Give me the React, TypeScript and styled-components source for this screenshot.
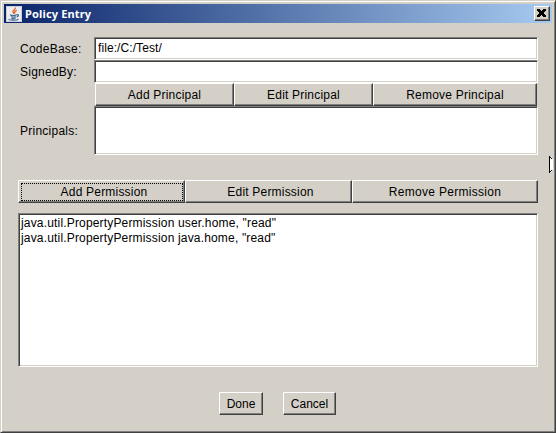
import React from "react";
import styled, { createGlobalStyle, css } from "styled-components";

const GlobalStyle = createGlobalStyle`
  * { box-sizing: border-box; }
  body { margin: 0; overflow: hidden; background: #d4d0c8; }
`;

const Window = styled.main`
  position: relative;
  width: 556px;
  height: 433px;
  padding: 2px;
  background: #d4d0c8;
  border: 1px solid;
  border-color: #d4d0c8 #404040 #404040 #d4d0c8;
  box-shadow: inset 1px 1px #fff, inset -1px -1px #808080;
  font: 12px/15px "Liberation Sans", Arial, sans-serif;
  color: #000;
`;

const TitleBar = styled.header`
  display: flex;
  align-items: center;
  height: 19px;
  margin: 1px 1px 0;
  padding: 0 2px;
  background: linear-gradient(to right, #0a246a, #a6caf0);
`;

const Title = styled.h1`
  flex: 1;
  margin: 0 0 0 3px;
  color: #fff;
  font: bold 11px/16px "Noto Sans", sans-serif;
  letter-spacing: 0.16px;
`;

const CloseButton = styled.button`
  display: grid;
  place-items: center;
  width: 16px;
  height: 15px;
  padding: 0 1px 1px 0;
  background: #d4d0c8;
  border: 1px solid;
  border-color: #fff #404040 #404040 #fff;
  box-shadow: inset -1px -1px #808080;
`;

const Body = styled.div`
  padding: 14px 15px 0 15px;
`;

const Form = styled.section`
  display: grid;
  grid-template-columns: 76px 444px;
  grid-template-rows: 23px 23px 23px 49px;
`;

const Label = styled.label<{ $drop?: number }>`
  padding: ${(p) => 5 + (p.$drop ?? 0)}px 0 0 2px;
  letter-spacing: 0.25px;
`;

const sunken = css`
  display: block;
  margin: 0;
  background: #fff;
  border: 1px solid;
  border-color: #808080 #fff #fff #808080;
  box-shadow: inset 1px 1px #404040, inset -1px -1px #d4d0c8;
  border-radius: 0;
  outline: 0;
  font: inherit;
  color: #000;
`;

const Field = styled.input`
  ${sunken}
  width: 444px;
  height: 23px;
  padding: 0 3px 1px;
  letter-spacing: 0.08px;
`;

const ListBox = styled.div<{ $height: number }>`
  ${sunken}
  height: ${(p) => p.$height}px;
  padding: 2px 2px;
`;

const Entry = styled.div`
  height: 15px;
  white-space: pre;
  letter-spacing: 0.17px;
`;

const ButtonRow = styled.div<{ $columns: string; $inset?: boolean }>`
  display: grid;
  grid-column: ${(p) => (p.$inset ? 2 : "auto")};
  grid-template-columns: ${(p) => p.$columns};
  margin-left: ${(p) => (p.$inset ? 1 : 0)}px;
`;

const Button = styled.button<{ $spacing?: number; $shift?: number }>`
  display: flex;
  align-items: center;
  justify-content: center;
  height: 23px;
  padding: 2px 0 0 ${(p) => p.$shift ?? 0}px;
  background: #d4d0c8;
  border: 1px solid;
  border-color: #fff #404040 #404040 #fff;
  border-radius: 0;
  box-shadow: inset -1px -1px #808080;
  font: inherit;
  color: #000;
  letter-spacing: ${(p) => p.$spacing ?? 0.2}px;
  white-space: nowrap;
`;

const FocusedButton = styled(Button)`
  align-items: flex-start;
  justify-content: flex-start;
  padding: 2px 0 0 2px;
`;

const FocusRing = styled.span`
  display: grid;
  place-items: center;
  width: 162px;
  height: 18px;
  padding: 1px 0 0 4px;
  border: 1px dotted #000;
`;

const Permissions = styled.section`
  display: grid;
  gap: 10px;
  margin-top: 25px;
`;

const Footer = styled.footer`
  display: grid;
  grid-template-columns: 44px 53px;
  column-gap: 20px;
  width: 117px;
  margin: 25px 0 0 201px;
`;

const Cursor = styled.svg`
  position: absolute;
  top: 155px;
  left: 548px;
`;

function JavaIcon() {
  return (
    <svg width="16" height="16" viewBox="0 0 16 16" aria-label="Java">
      <rect width="16" height="16" fill="#ececf0" />
      <path d="M.5.5h15v15H.5z" fill="none" stroke="#c9cfdb" />
      <path d="M9.3 1.5C10 4 6 4.2 7 6.2L8.2 8M10.8 4.3C8.5 5 8.2 6 9 7.5" fill="none" stroke="#e2622b" strokeWidth="1.3" />
      <path d="M4 8.7c1.5 1 5 .8 7 0m0 0c2-.4 2 1.5-.3 2.3M5 10.6c1.3.8 3.6.7 5 .2M5.3 12.2c1.3.7 3 .6 4.2.1M3 13c-1 1.2 7.2 1.7 9.5.2" fill="none" stroke="#3f6d92" strokeWidth="1.15" />
    </svg>
  );
}

export default function App() {
  return (
    <>
      <GlobalStyle />
      <Window>
        <TitleBar>
          <JavaIcon />
          <Title>Policy Entry</Title>
          <CloseButton aria-label="Close">
            <svg width="9" height="8" viewBox="0 0 9 8" shapeRendering="crispEdges">
              <path d="M0 0h3v1H0zM6 0h3v1H6zM0 1h4v1H0zM5 1h4v1H5zM1 2h7v1H1zM2 3h5v2H2zM1 5h7v1H1zM0 6h4v1H0zM5 6h4v1H5zM0 7h3v1H0zM6 7h3v1H6z" />
            </svg>
          </CloseButton>
        </TitleBar>
        <Body>
          <Form>
            <Label htmlFor="code">CodeBase:</Label>
            <Field id="code" defaultValue="file:/C:/Test/" />
            <Label htmlFor="signed">SignedBy:</Label>
            <Field id="signed" />
            <ButtonRow $inset $columns="139px 139px 164px">
              <Button>Add Principal</Button>
              <Button>Edit Principal</Button>
              <Button $spacing={0.22}>Remove Principal</Button>
            </ButtonRow>
            <Label $drop={13}>Principals:</Label>
            <ListBox $height={49} />
          </Form>
          <Permissions>
            <ButtonRow $columns="167px 167px 186px">
              <FocusedButton><FocusRing>Add Permission</FocusRing></FocusedButton>
              <Button $shift={4}>Edit Permission</Button>
              <Button $spacing={0.3}>Remove Permission</Button>
            </ButtonRow>
            <ListBox $height={154}>
              <Entry>java.util.PropertyPermission user.home, "read"</Entry>
              <Entry>java.util.PropertyPermission java.home, "read"</Entry>
            </ListBox>
          </Permissions>
          <Footer>
            <Button $spacing={0}>Done</Button>
            <Button $spacing={0}>Cancel</Button>
          </Footer>
        </Body>
        <Cursor width="4" height="17" viewBox="0 0 4 17" shapeRendering="crispEdges">
          <path d="M1 1h2v2h1v11H3v2H1z" fill="#fff" />
          <path d="M0 0h1v17H0zM1 1h1v1H1zM2 2h1v1H2zM1 15h1v1H1zM2 14h1v1H2z" />
        </Cursor>
      </Window>
    </>
  );
}
